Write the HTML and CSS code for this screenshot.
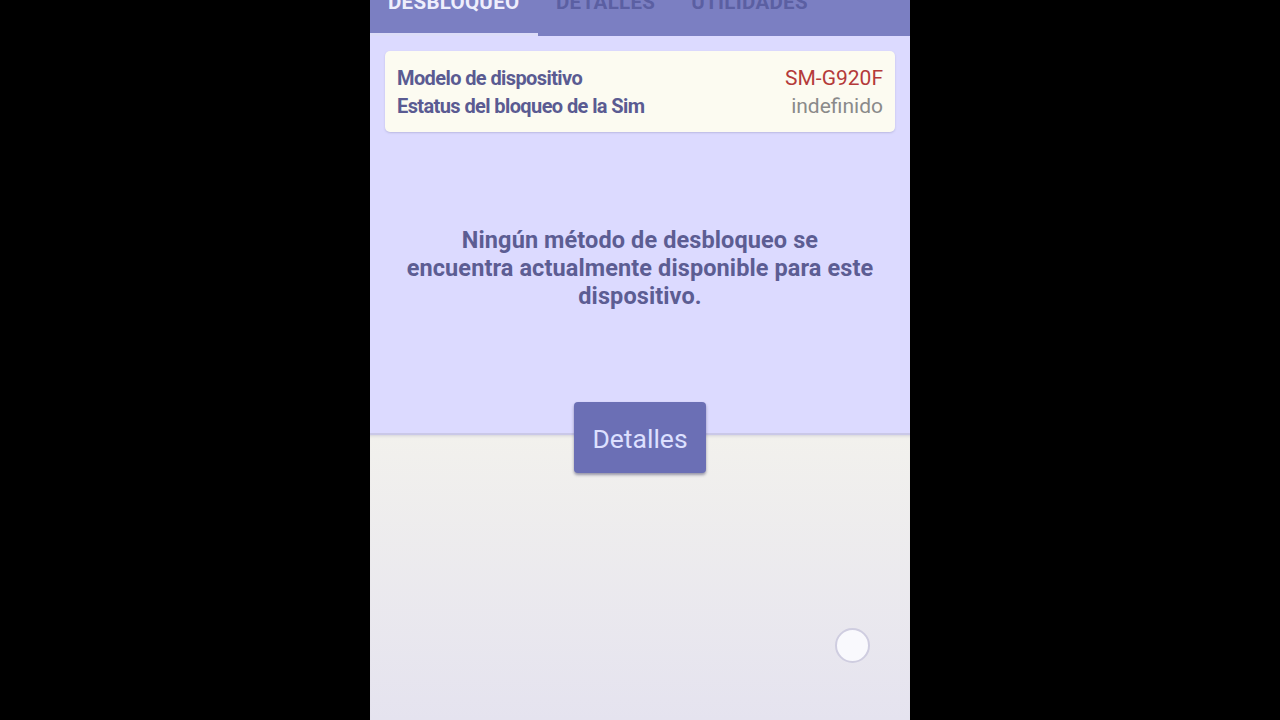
FILE: index.html
```html
<!DOCTYPE html>
<html lang="es">
<head>
<meta charset="utf-8">
<title>Desbloqueo</title>
<link rel="stylesheet" href="styles.css">
</head>
<body>
<div class="screen">
  <header class="tabs">
    <div class="tab active"><span class="tab-label">DESBLOQUEO</span></div>
    <div class="tab"><span class="tab-label">DETALLES</span></div>
    <div class="tab"><span class="tab-label">UTILIDADES</span></div>
  </header>
  <section class="top">
    <div class="card">
      <div class="row"><span class="key">Modelo de dispositivo</span><span class="val model">SM-G920F</span></div>
      <div class="row"><span class="key">Estatus del bloqueo de la Sim</span><span class="val">indefinido</span></div>
    </div>
    <p class="message">Ningún método de desbloqueo se<br>encuentra actualmente disponible para este dispositivo.</p>
    <button class="btn">Detalles</button>
  </section>
  <section class="bottom"></section>
  <div class="float-dot"></div>
</div>
</body>
</html>
```
FILE: styles.css
```css
* { box-sizing: border-box; }
html, body { margin: 0; padding: 0; background: #000; height: 720px; overflow: hidden; }
body { font-family: Roboto, "Noto Sans", sans-serif; }
.screen {
  position: relative;
  width: 540px;
  height: 720px;
  margin: 0 auto;
  display: flex;
  flex-direction: column;
  overflow: hidden;
}
.tabs {
  height: 36px;
  background: #7b7fc2;
  display: flex;
  flex-shrink: 0;
}
.tab {
  padding: 0 18px;
  display: flex;
  align-items: flex-start;
}
.tab:first-child { width: 168px; }
.tab-label {
  font-weight: 700;
  font-size: 20.5px;
  line-height: 24px;
  margin-top: -10px;
  color: #5b5fa2;
  letter-spacing: 0.3px;
}
.tab.active { border-bottom: 3px solid #dcdcf8; }
.tab.active .tab-label { color: #eeeefc; }
.top {
  background: #dcdaff;
  height: 399px;
  flex-shrink: 0;
  display: flex;
  flex-direction: column;
  align-items: center;
  padding: 15px 15px 0;
  border-bottom: 2px solid #cac8e8;
}
.top > * { flex-shrink: 0; }
.card {
  width: 100%;
  background: #fcfbf1;
  border-radius: 5px;
  padding: 13px 12px 12px;
  box-shadow: 0 1px 2px rgba(90, 90, 140, 0.25);
}
.row {
  display: flex;
  justify-content: space-between;
  line-height: 28px;
}
.key {
  font-weight: 700;
  font-size: 20px;
  color: #5a5b92;
  letter-spacing: -0.6px;
}
.val {
  font-size: 21px;
  color: #8a8a8a;
}
.val.model { color: #b43a3a; }
.message {
  margin: 94px 0 0;
  width: 490px;
  text-align: center;
  font-weight: 700;
  font-size: 23.5px;
  line-height: 28px;
  color: #5c5d93;
  letter-spacing: 0.1px;
}
.btn {
  margin-top: 92px;
  width: 132px;
  height: 71px;
  position: relative;
  z-index: 2;
  border: none;
  border-radius: 4px;
  background: #6b6fb5;
  color: #dde0ff;
  font-family: Roboto, sans-serif;
  font-size: 26.5px;
  padding: 2px 0 0;
  box-shadow: 0 2px 3px rgba(40, 40, 80, 0.45);
}
.bottom {
  flex: 1;
  background: linear-gradient(#f2f1ed, #e5e3ef);
  box-shadow: inset 0 3px 3px -2px rgba(120, 120, 160, 0.25);
}
.float-dot {
  position: absolute;
  left: 465px;
  top: 628px;
  width: 35px;
  height: 35px;
  border-radius: 50%;
  background: #f9f9fd;
  border: 2px solid #cfcde0;
}
```
